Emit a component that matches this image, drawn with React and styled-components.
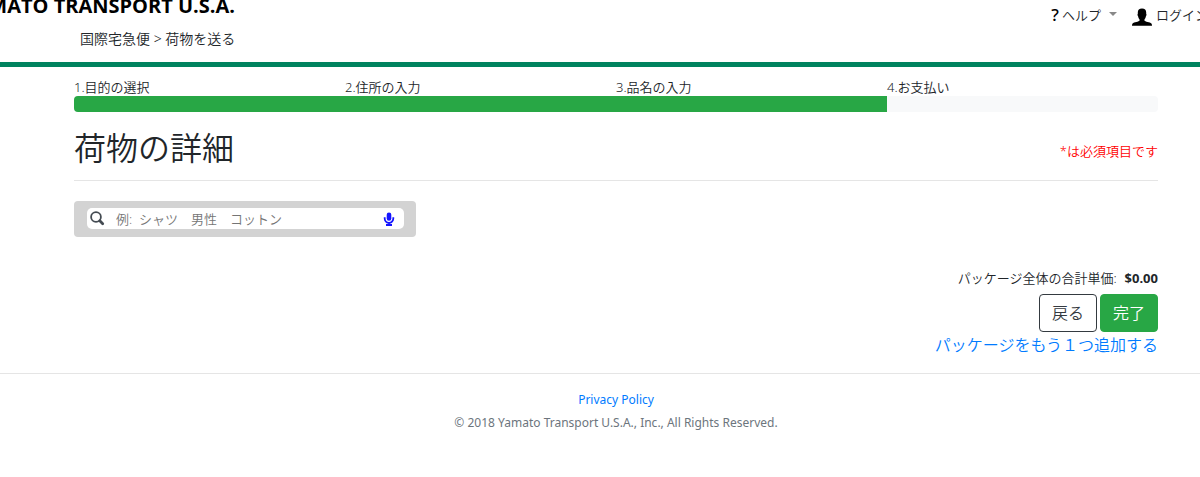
import React from "react";
import styled, { createGlobalStyle } from "styled-components";

const GlobalStyle = createGlobalStyle`
  *, *::before, *::after { box-sizing: border-box; }
  body {
    margin: 0;
    overflow: hidden;
    background: #fff;
    color: #212529;
    font-family: "Noto Sans", "Noto Sans CJK JP", sans-serif;
    font-size: 13px;
    font-weight: 350;
    line-height: 20px;
  }
  button, input { font: inherit; }
  a { color: #007bff; text-decoration: none; }
`;

/* The page is slightly wider than its window and runs off the right edge. */
const Page = styled.div`
  width: calc(100% + 32px);
`;

const Header = styled.header`
  display: flex;
  justify-content: space-between;
  height: 67px;
  border-bottom: 5px solid #00835f;
`;

const Brand = styled.div`
  width: 235px;
`;

const LogoText = styled.div`
  display: flex;
  justify-content: flex-end;
  margin-top: -8px;
  color: #000;
  font-family: "Open Sans", sans-serif;
  font-size: 20px;
  font-weight: 700;
  line-height: 28px;
  white-space: nowrap;
`;

const Breadcrumb = styled.div`
  margin-top: 9px;
  padding-left: 80px;
  font-size: 14px;
  white-space: nowrap;
`;

const Nav = styled.nav`
  display: flex;
  align-items: flex-start;
  padding: 5px 24px 0 0;
  a { display: flex; align-items: center; height: 20px; color: #212529; }
`;

const HelpLink = styled.a`
  margin-right: 15px;
`;

const Question = styled.span`
  margin-right: 3px;
  color: #000;
  font-size: 17px;
  font-weight: 500;
`;

const Caret = styled.span`
  margin: 0 0 3px 8px;
  border: 4px solid transparent;
  border-top-color: #888;
  border-bottom: 0;
`;

const UserIcon = styled.svg`
  width: 20px;
  height: 18px;
  margin: 4px 4px 0 0;
`;

const Main = styled.main`
  padding: 11px 74px 0;
`;

const Steps = styled.ol`
  display: grid;
  grid-template-columns: repeat(4, 1fr);
  margin: 0;
  padding: 0;
  list-style: none;
  line-height: 18px;
`;

const Progress = styled.div`
  height: 16px;
  overflow: hidden;
  border-radius: 4px;
  background: #f8f9fa;
`;

const ProgressFill = styled.div`
  width: 75%;
  height: 100%;
  background: #28a745;
`;

const TitleRow = styled.div`
  display: flex;
  justify-content: space-between;
  align-items: center;
  height: 69px;
  margin-bottom: 20px;
  padding-top: 4px;
  border-bottom: 1px solid #e5e5e5;
`;

const Title = styled.h1`
  margin: 0;
  font-size: 32px;
  font-weight: 350;
  line-height: 40px;
`;

const Required = styled.span`
  margin-top: 6px;
  color: #f00;
`;

const SearchPanel = styled.form`
  width: 342px;
  padding: 7px 12px 8px 13px;
  border-radius: 4px;
  background: #d3d3d3;
`;

const SearchField = styled.label`
  display: flex;
  align-items: center;
  height: 21px;
  padding: 0 8px 0 3px;
  border-radius: 5px;
  background: #fff;
`;

const SearchInput = styled.input`
  flex: 1;
  min-width: 0;
  height: 20px;
  margin: 0;
  padding: 0 0 0 11px;
  border: 0;
  outline: 0;
  background: transparent;
  &::placeholder { color: #757575; opacity: 1; }
`;

const MicButton = styled.button`
  display: flex;
  padding: 0;
  border: 0;
  background: none;
`;

const Summary = styled.section`
  display: flex;
  flex-direction: column;
  align-items: flex-end;
  padding-top: 31px;
`;

const Total = styled.div`
  display: flex;
  gap: 8px;
  margin-bottom: 6px;
  strong { font-weight: 700; }
`;

const Actions = styled.div`
  display: flex;
  gap: 3px;
`;

const Button = styled.button`
  height: 38px;
  padding: 0 12px;
  border: 1px solid ${(p) => (p.$primary ? "#28a745" : "#343a40")};
  border-radius: 4px;
  background: ${(p) => (p.$primary ? "#28a745" : "#fff")};
  color: ${(p) => (p.$primary ? "#fff" : "#343a40")};
  font-size: 16px;
`;

const AddLink = styled.a`
  font-size: 16px;
  line-height: 26px;
`;

const Footer = styled.footer`
  display: flex;
  flex-direction: column;
  align-items: center;
  gap: 3px;
  margin-top: 15px;
  padding: 16px 0 20px;
  border-top: 1px solid #e5e5e5;
  color: #6c757d;
  font-size: 12px;
  font-weight: 400;
`;

const steps = ["1.目的の選択", "2.住所の入力", "3.品名の入力", "4.お支払い"];

export default function App() {
  return (
    <Page>
      <GlobalStyle />
      <Header>
        <Brand>
          <LogoText>YAMATO TRANSPORT U.S.A.</LogoText>
          <Breadcrumb>国際宅急便 &gt; 荷物を送る</Breadcrumb>
        </Brand>
        <Nav>
          <HelpLink href="#help"><Question>?</Question>ヘルプ<Caret /></HelpLink>
          <a href="#login">
            <UserIcon viewBox="0 0 20 18" aria-hidden="true">
              <path d="M10 0.500C7.200 0.500 5.800 2 5.800 4.500v1.600c-.5.300-.4 1.400.2 2 .3 1.600.8 2.500 1.500 3.200v1.400c-.4.900-5.600 1.300-6.900 2.700-.4.500-.6 1.100-.6 2.400h20c0-1.300-.2-1.900-.6-2.400-1.300-1.400-6.500-1.800-6.900-2.700v-1.400c.7-.7 1.200-1.600 1.500-3.200.6-.6.7-1.700.2-2V4.500C14.200 2 12.800.5 10 .5z" />
            </UserIcon>
            ログイン
          </a>
        </Nav>
      </Header>
      <Main>
        <Steps>{steps.map((s) => <li key={s}>{s}</li>)}</Steps>
        <Progress role="progressbar" aria-valuenow={75} aria-valuemin={0} aria-valuemax={100}>
          <ProgressFill />
        </Progress>
        <TitleRow>
          <Title>荷物の詳細</Title>
          <Required>*は必須項目です</Required>
        </TitleRow>
        <SearchPanel>
          <SearchField>
            <svg width="15" height="15" viewBox="0 0 15 15" fill="none" stroke="#444b52" aria-hidden="true">
              <circle cx="6" cy="6" r="4.900" strokeWidth="1.800" />
              <path d="M9.800 9.800l2.900 2.900" strokeWidth="2.800" strokeLinecap="round" />
            </svg>
            <SearchInput type="text" aria-label="品名" placeholder="例:  シャツ　男性　コットン" />
            <MicButton type="button" aria-label="音声入力">
              <svg width="14" height="14" viewBox="0 0 14 14" fill="none" stroke="#1414ff" aria-hidden="true">
                <rect x="4.700" y="0.500" width="4.600" height="8.200" rx="2.300" fill="#1414ff" stroke="none" />
                <path d="M2.700 5.300v1.200a4.300 4.300 0 0 0 8.600 0V5.300M7 10.800v2M4 13h6" strokeWidth="1.800" />
              </svg>
            </MicButton>
          </SearchField>
        </SearchPanel>
        <Summary>
          <Total><span>パッケージ全体の合計単価:</span><strong>$0.00</strong></Total>
          <Actions>
            <Button type="button">戻る</Button>
            <Button type="button" $primary>完了</Button>
          </Actions>
          <AddLink href="#add">パッケージをもう１つ追加する</AddLink>
        </Summary>
      </Main>
      <Footer>
        <a href="#privacy">Privacy Policy</a>
        <span>© 2018 Yamato Transport U.S.A., Inc., All Rights Reserved.</span>
      </Footer>
    </Page>
  );
}
